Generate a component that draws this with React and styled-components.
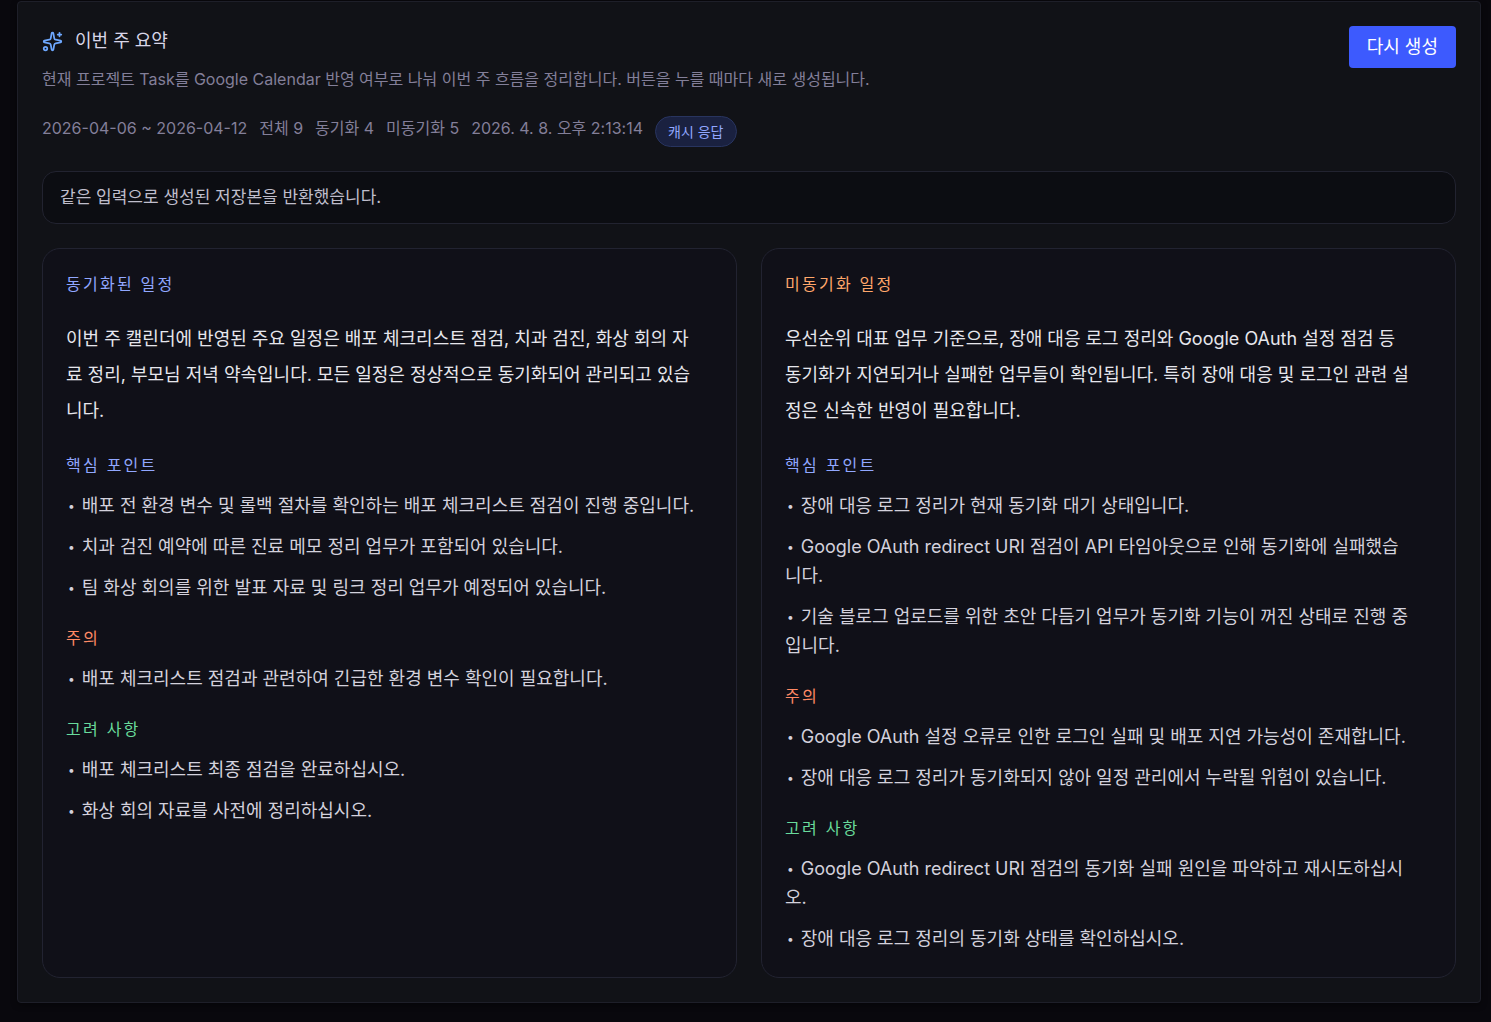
import React from "react";
import styled, { createGlobalStyle } from "styled-components";

const GlobalStyle = createGlobalStyle`
  *, *::before, *::after { box-sizing: border-box; }
  body {
    margin: 0;
    background: #09080d;
    color: #e2e2ea;
    font-family: Inter, "Noto Sans CJK KR", sans-serif;
    font-size: 18px;
  }
  h2, h3, h4, p, ul { margin: 0; padding: 0; }
`;

const Page = styled.main`
  padding: 1px 10px 20px 17px;
`;

const Panel = styled.section`
  display: flex;
  flex-direction: column;
  gap: 24px;
  padding: 24px;
  border: 1px solid #1e1f29;
  border-radius: 4px;
  background: #111217;
  box-shadow: 0 2px 6px rgba(0, 0, 0, 0.4);
`;

const Header = styled.header`
  display: flex;
  justify-content: space-between;
  align-items: flex-start;
  gap: 24px;
`;

const Intro = styled.div`
  display: flex;
  flex-direction: column;
  gap: 12px;
`;

const TitleRow = styled.div`
  display: flex;
  align-items: center;
  gap: 12px;
  color: #6ea8ff;
`;

const Title = styled.h2`
  font-size: 18px;
  line-height: 30px;
  font-weight: 400;
  color: #d9d6e8;
`;

const Description = styled.p`
  font-size: 16px;
  line-height: 22px;
  color: #837f99;
`;

const Meta = styled.div`
  display: flex;
  flex-wrap: wrap;
  gap: 12px;
  padding-top: 14px;
  font-size: 16px;
  line-height: 24px;
  color: #837f99;
`;

const Badge = styled.span`
  padding: 0 12px;
  border: 1px solid #28345f;
  border-radius: 16px;
  background: #1a2140;
  color: #91a7ff;
  font-size: 14px;
  line-height: 29px;
`;

const RegenerateButton = styled.button`
  flex: none;
  padding: 9px 18px;
  border: 0;
  border-radius: 4px;
  background: #3d5afe;
  color: #fff;
  font: inherit;
  line-height: 24px;
  cursor: pointer;
`;

const Notice = styled.p`
  padding: 12px 17px;
  border: 1px solid #222330;
  border-radius: 14px;
  background: #0c0d12;
  color: #bfbdcb;
  font-size: 17px;
  line-height: 27px;
`;

const Columns = styled.div`
  display: grid;
  grid-template-columns: 1fr 1fr;
  gap: 24px;
`;

const Card = styled.article`
  padding: 23px 40px 24px 23px;
  border: 1px solid #222331;
  border-radius: 18px;
  background: #101018;
`;

const tones = { blue: "#91a7ff", orange: "#ffa76b", red: "#ff8a65", green: "#69db9c" };

const CardTitle = styled.h3`
  font-size: 16px;
  line-height: 24px;
  font-weight: 400;
  letter-spacing: 0.14em;
  color: ${({ $tone }) => tones[$tone]};
`;

const Summary = styled.p`
  margin-top: 25px;
  line-height: 36px;
  color: #e6e6ec;
`;

const Group = styled.section`
  margin-top: 24px;
`;

const List = styled.ul`
  display: flex;
  flex-direction: column;
  gap: 12px;
  margin-top: 14px;
  list-style: none;
`;

const Item = styled.li`
  line-height: 29px;
  color: #d3d1dc;

  &::before {
    content: "•";
    margin: 0 7px 0 2px;
    font-size: 12px;
    line-height: 1;
    vertical-align: 2px;
  }
`;

const SparkleIcon = () => (
  <svg width="21" height="21" viewBox="0 0 24 24" fill="none" stroke="currentColor" strokeWidth="2" strokeLinecap="round" strokeLinejoin="round" aria-hidden="true">
    <path d="M11.017 2.814a1 1 0 0 1 1.966 0l1.051 5.558a2 2 0 0 0 1.594 1.594l5.558 1.051a1 1 0 0 1 0 1.966l-5.558 1.051a2 2 0 0 0-1.594 1.594l-1.051 5.558a1 1 0 0 1-1.966 0l-1.051-5.558a2 2 0 0 0-1.594-1.594l-5.558-1.051a1 1 0 0 1 0-1.966l5.558-1.051a2 2 0 0 0 1.594-1.594z" />
    <path d="M20 2v4" />
    <path d="M22 4h-4" />
    <circle cx="4" cy="20" r="2" />
  </svg>
);

const cards = [
  {
    title: "동기화된 일정",
    tone: "blue",
    summary:
      "이번 주 캘린더에 반영된 주요 일정은 배포 체크리스트 점검, 치과 검진, 화상 회의 자료 정리, 부모님 저녁 약속입니다. 모든 일정은 정상적으로 동기화되어 관리되고 있습니다.",
    groups: [
      {
        title: "핵심 포인트",
        tone: "blue",
        items: [
          "배포 전 환경 변수 및 롤백 절차를 확인하는 배포 체크리스트 점검이 진행 중입니다.",
          "치과 검진 예약에 따른 진료 메모 정리 업무가 포함되어 있습니다.",
          "팀 화상 회의를 위한 발표 자료 및 링크 정리 업무가 예정되어 있습니다.",
        ],
      },
      { title: "주의", tone: "red", items: ["배포 체크리스트 점검과 관련하여 긴급한 환경 변수 확인이 필요합니다."] },
      {
        title: "고려 사항",
        tone: "green",
        items: ["배포 체크리스트 최종 점검을 완료하십시오.", "화상 회의 자료를 사전에 정리하십시오."],
      },
    ],
  },
  {
    title: "미동기화 일정",
    tone: "orange",
    summary:
      "우선순위 대표 업무 기준으로, 장애 대응 로그 정리와 Google OAuth 설정 점검 등 동기화가 지연되거나 실패한 업무들이 확인됩니다. 특히 장애 대응 및 로그인 관련 설정은 신속한 반영이 필요합니다.",
    groups: [
      {
        title: "핵심 포인트",
        tone: "blue",
        items: [
          "장애 대응 로그 정리가 현재 동기화 대기 상태입니다.",
          "Google OAuth redirect URI 점검이 API 타임아웃으로 인해 동기화에 실패했습니다.",
          "기술 블로그 업로드를 위한 초안 다듬기 업무가 동기화 기능이 꺼진 상태로 진행 중입니다.",
        ],
      },
      {
        title: "주의",
        tone: "red",
        items: [
          "Google OAuth 설정 오류로 인한 로그인 실패 및 배포 지연 가능성이 존재합니다.",
          "장애 대응 로그 정리가 동기화되지 않아 일정 관리에서 누락될 위험이 있습니다.",
        ],
      },
      {
        title: "고려 사항",
        tone: "green",
        items: [
          "Google OAuth redirect URI 점검의 동기화 실패 원인을 파악하고 재시도하십시오.",
          "장애 대응 로그 정리의 동기화 상태를 확인하십시오.",
        ],
      },
    ],
  },
];

const meta = ["2026-04-06 ~ 2026-04-12", "전체 9", "동기화 4", "미동기화 5", "2026. 4. 8. 오후 2:13:14"];

export default function App() {
  return (
    <>
      <GlobalStyle />
      <Page>
        <Panel>
          <Header>
            <Intro>
              <TitleRow>
                <SparkleIcon />
                <Title>이번 주 요약</Title>
              </TitleRow>
              <Description>
                현재 프로젝트 Task를 Google Calendar 반영 여부로 나눠 이번 주 흐름을 정리합니다. 버튼을 누를 때마다 새로
                생성됩니다.
              </Description>
              <Meta>
                {meta.map((text) => (
                  <span key={text}>{text}</span>
                ))}
                <Badge>캐시 응답</Badge>
              </Meta>
            </Intro>
            <RegenerateButton type="button">다시 생성</RegenerateButton>
          </Header>
          <Notice>같은 입력으로 생성된 저장본을 반환했습니다.</Notice>
          <Columns>
            {cards.map((card) => (
              <Card key={card.title}>
                <CardTitle $tone={card.tone}>{card.title}</CardTitle>
                <Summary>{card.summary}</Summary>
                {card.groups.map((group) => (
                  <Group key={group.title}>
                    <CardTitle as="h4" $tone={group.tone}>
                      {group.title}
                    </CardTitle>
                    <List>
                      {group.items.map((item) => (
                        <Item key={item}>{item}</Item>
                      ))}
                    </List>
                  </Group>
                ))}
              </Card>
            ))}
          </Columns>
        </Panel>
      </Page>
    </>
  );
}
